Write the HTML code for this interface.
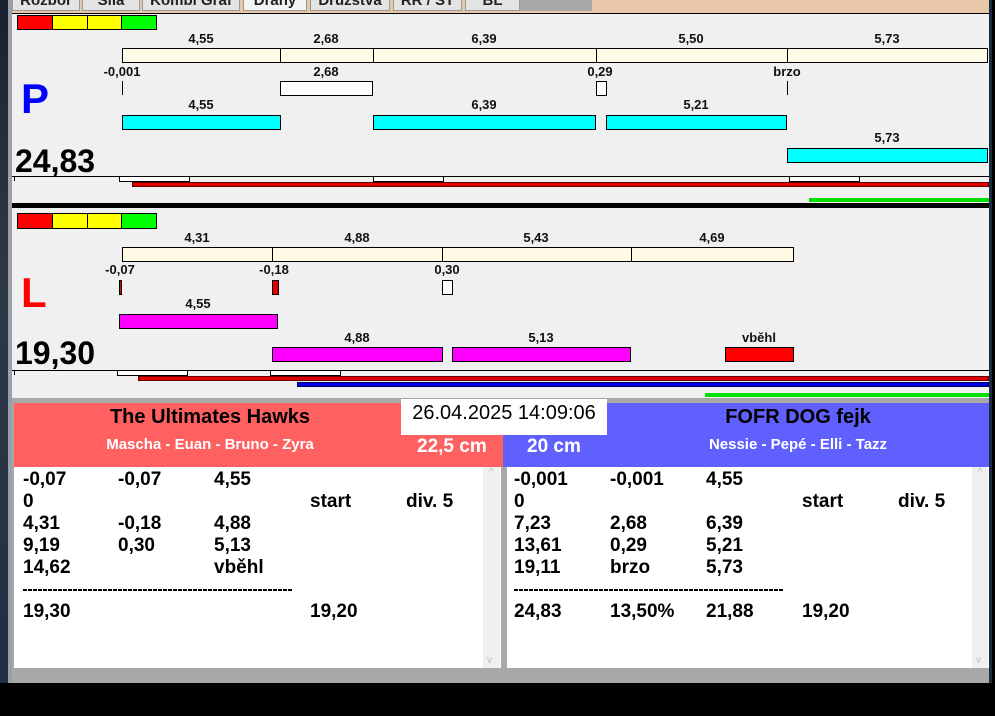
<!DOCTYPE html>
<html><head><meta charset="utf-8"><style>
*{margin:0;padding:0;box-sizing:border-box}
body{width:995px;height:716px;position:relative;overflow:hidden;background:#000;font-family:"Liberation Sans",sans-serif}
div{position:absolute}
.b{border:1px solid #000}
.l{font-weight:bold;font-size:13px;color:#111;transform:translateX(-50%);white-space:nowrap;line-height:14px}
.cr{background:#fffbe6}
.cy{background:#00ffff}
.mg{background:#ff00ff}
.t{font-family:"Liberation Sans Narrow","Liberation Sans",sans-serif;font-weight:bold;font-size:19px;color:#000;line-height:22px;white-space:nowrap}
.tab{top:0;height:11px;background:#e4e4e4;border:1px solid #999;border-top:none;font-size:15px;font-weight:bold;overflow:hidden;text-align:center;line-height:1px;color:#222}
.d{height:2px;background:repeating-linear-gradient(90deg,#000 0 4px,transparent 4px 5px)}
</style></head><body>
<div style="left:0;top:0;width:9px;height:683px;background:linear-gradient(#1a2030,#303848 40%,#203040)"></div>
<div style="left:8px;top:0;width:4px;height:683px;background:#9aa0a8"></div>
<div style="left:12px;top:0;width:978px;height:13px;background:#e8c8a8"></div>
<div style="left:520px;top:0;width:72px;height:11px;background:#a8a8a8"></div>
<div class="tab" style="left:12px;width:68px">Rozbor</div>
<div class="tab" style="left:82px;width:58px">Síla</div>
<div class="tab" style="left:142px;width:98px">Kombi Graf</div>
<div class="tab" style="left:243px;width:64px;background:#f4f4f4">Dráhy</div>
<div class="tab" style="left:310px;width:80px">Družstva</div>
<div class="tab" style="left:393px;width:69px">RR / ST</div>
<div class="tab" style="left:465px;width:55px">BL</div>
<div style="left:12px;top:13px;width:978px;height:670px;background:#a8a8a8;border-top:1px solid #000"></div>
<div style="left:12px;top:14px;width:977px;height:384px;background:#f0f0f0"></div>
<div style="left:989px;top:0;width:6px;height:683px;background:#000"></div>
<div style="left:989px;top:0;width:3px;height:683px;background:#1a2a40"></div>

<div class="b" style="left:17px;top:15px;width:36px;height:15px;background:#f00"></div>
<div class="b" style="left:52px;top:15px;width:36px;height:15px;background:#ff0"></div>
<div class="b" style="left:87px;top:15px;width:35px;height:15px;background:#ff0"></div>
<div class="b" style="left:121px;top:15px;width:36px;height:15px;background:#0f0"></div>

<div class="l" style="left:201px;top:32px">4,55</div>
<div class="l" style="left:326px;top:32px">2,68</div>
<div class="l" style="left:484px;top:32px">6,39</div>
<div class="l" style="left:691px;top:32px">5,50</div>
<div class="l" style="left:887px;top:32px">5,73</div>
<div class="b cr" style="left:122px;top:48px;width:159px;height:15px"></div>
<div class="b cr" style="left:280px;top:48px;width:94px;height:15px"></div>
<div class="b cr" style="left:373px;top:48px;width:224px;height:15px"></div>
<div class="b cr" style="left:596px;top:48px;width:192px;height:15px"></div>
<div class="b cr" style="left:787px;top:48px;width:201px;height:15px"></div>

<div class="l" style="left:122px;top:65px">-0,001</div>
<div class="l" style="left:326px;top:65px">2,68</div>
<div class="l" style="left:600px;top:65px">0,29</div>
<div class="l" style="left:787px;top:65px">brzo</div>
<div style="left:122px;top:81px;width:1px;height:14px;background:#000"></div>
<div class="b" style="left:280px;top:81px;width:93px;height:15px;background:#fff"></div>
<div class="b" style="left:596px;top:81px;width:11px;height:15px;background:#fff"></div>
<div style="left:787px;top:81px;width:1px;height:14px;background:#000"></div>

<div class="l" style="left:201px;top:98px">4,55</div>
<div class="l" style="left:484px;top:98px">6,39</div>
<div class="l" style="left:696px;top:98px">5,21</div>
<div class="b cy" style="left:122px;top:115px;width:159px;height:15px"></div>
<div class="b cy" style="left:373px;top:115px;width:223px;height:15px"></div>
<div class="b cy" style="left:606px;top:115px;width:181px;height:15px"></div>
<div class="l" style="left:887px;top:131px">5,73</div>
<div class="b cy" style="left:787px;top:148px;width:201px;height:15px"></div>

<div style="left:21px;top:74px;font-size:42px;font-weight:bold;color:#0000ff;line-height:50px">P</div>
<div style="left:15px;top:143px;font-size:32px;font-weight:bold;color:#000;line-height:36px">24,83</div>
<div style="left:12px;top:176px;width:977px;height:1px;background:#000"></div>
<div style="left:14px;top:176px;width:1px;height:5px;background:#000"></div>
<div class="b" style="left:119px;top:176px;width:71px;height:6px;background:#fff"></div>
<div class="b" style="left:373px;top:176px;width:71px;height:6px;background:#fff"></div>
<div class="b" style="left:789px;top:176px;width:71px;height:6px;background:#fff"></div>
<div style="left:132px;top:182px;width:857px;height:5px;background:#e00000;border:1px solid #600"></div>
<div style="left:809px;top:198px;width:180px;height:4px;background:#00e000"></div>
<div style="left:12px;top:203px;width:977px;height:5px;background:#000"></div>

<div class="b" style="left:17px;top:213px;width:36px;height:16px;background:#f00"></div>
<div class="b" style="left:52px;top:213px;width:36px;height:16px;background:#ff0"></div>
<div class="b" style="left:87px;top:213px;width:35px;height:16px;background:#ff0"></div>
<div class="b" style="left:121px;top:213px;width:36px;height:16px;background:#0f0"></div>

<div class="l" style="left:197px;top:231px">4,31</div>
<div class="l" style="left:357px;top:231px">4,88</div>
<div class="l" style="left:536px;top:231px">5,43</div>
<div class="l" style="left:712px;top:231px">4,69</div>
<div class="b cr" style="left:122px;top:247px;width:151px;height:15px"></div>
<div class="b cr" style="left:272px;top:247px;width:171px;height:15px"></div>
<div class="b cr" style="left:442px;top:247px;width:190px;height:15px"></div>
<div class="b cr" style="left:631px;top:247px;width:163px;height:15px"></div>

<div class="l" style="left:120px;top:263px">-0,07</div>
<div class="l" style="left:274px;top:263px">-0,18</div>
<div class="l" style="left:447px;top:263px">0,30</div>
<div class="b" style="left:119px;top:280px;width:3px;height:15px;background:#e00000"></div>
<div class="b" style="left:272px;top:280px;width:7px;height:15px;background:#e00000"></div>
<div class="b" style="left:442px;top:280px;width:11px;height:15px;background:#fff"></div>

<div class="l" style="left:198px;top:297px">4,55</div>
<div class="b mg" style="left:119px;top:314px;width:159px;height:15px"></div>
<div class="l" style="left:357px;top:331px">4,88</div>
<div class="l" style="left:541px;top:331px">5,13</div>
<div class="l" style="left:759px;top:331px">vběhl</div>
<div class="b mg" style="left:272px;top:347px;width:171px;height:15px"></div>
<div class="b mg" style="left:452px;top:347px;width:179px;height:15px"></div>
<div class="b" style="left:725px;top:347px;width:69px;height:15px;background:#f00"></div>

<div style="left:21px;top:268px;font-size:42px;font-weight:bold;color:#f00;line-height:50px">L</div>
<div style="left:15px;top:335px;font-size:32px;font-weight:bold;color:#000;line-height:36px">19,30</div>
<div style="left:12px;top:370px;width:977px;height:1px;background:#000"></div>
<div style="left:14px;top:370px;width:1px;height:5px;background:#000"></div>
<div class="b" style="left:117px;top:370px;width:71px;height:6px;background:#fff"></div>
<div class="b" style="left:270px;top:370px;width:71px;height:6px;background:#fff"></div>
<div style="left:138px;top:376px;width:851px;height:5px;background:#e00000;border:1px solid #600"></div>
<div style="left:297px;top:382px;width:692px;height:5px;background:#0000e0;border:1px solid #006"></div>
<div style="left:705px;top:393px;width:284px;height:4px;background:#00e000"></div>

<div style="left:14px;top:403px;width:489px;height:64px;background:#ff6060"></div>
<div style="left:503px;top:403px;width:486px;height:64px;background:#6060ff"></div>
<div class="t" style="left:14px;top:405px;width:392px;text-align:center;font-size:20px;line-height:24px">The Ultimates Hawks</div>
<div class="t" style="left:14px;top:434px;width:392px;text-align:center;color:#fff;font-size:15px">Mascha - Euan - Bruno - Zyra</div>
<div class="t" style="left:608px;top:405px;width:380px;text-align:center;font-size:20px;line-height:24px">FOFR DOG fejk</div>
<div class="t" style="left:608px;top:434px;width:380px;text-align:center;color:#fff;font-size:15px">Nessie - Pepé - Elli - Tazz</div>
<div style="left:401px;top:399px;width:206px;height:36px;background:#fff;font-size:20px;text-align:center;line-height:28px;color:#000">26.04.2025 14:09:06</div>
<div style="left:417px;top:436px;font-size:19px;font-weight:bold;color:#fff;line-height:22px">22,5 cm</div>
<div style="left:527px;top:436px;font-size:19px;font-weight:bold;color:#fff;line-height:22px">20 cm</div>

<div style="left:14px;top:467px;width:487px;height:201px;background:#fff"></div>
<div style="left:483px;top:467px;width:17px;height:201px;background:#f0f0f0;color:#bbb;font-size:10px;text-align:center">^<div style="left:4px;bottom:2px">v</div></div>
<div style="left:507px;top:467px;width:482px;height:201px;background:#fff"></div>
<div style="left:972px;top:467px;width:16px;height:201px;background:#f0f0f0;color:#bbb;font-size:10px;text-align:center">^<div style="left:4px;bottom:2px">v</div></div>

<div class="t" style="left:23px;top:469px">-0,07</div><div class="t" style="left:118px;top:469px">-0,07</div><div class="t" style="left:214px;top:469px">4,55</div>
<div class="t" style="left:23px;top:491px">0</div><div class="t" style="left:310px;top:491px">start</div><div class="t" style="left:406px;top:491px">div. 5</div>
<div class="t" style="left:23px;top:513px">4,31</div><div class="t" style="left:118px;top:513px">-0,18</div><div class="t" style="left:214px;top:513px">4,88</div>
<div class="t" style="left:23px;top:535px">9,19</div><div class="t" style="left:118px;top:535px">0,30</div><div class="t" style="left:214px;top:535px">5,13</div>
<div class="t" style="left:23px;top:557px">14,62</div><div class="t" style="left:214px;top:557px">vběhl</div>
<div class="d" style="left:23px;top:589px;width:270px"></div>
<div class="t" style="left:23px;top:601px">19,30</div><div class="t" style="left:310px;top:601px">19,20</div>

<div class="t" style="left:514px;top:469px">-0,001</div><div class="t" style="left:610px;top:469px">-0,001</div><div class="t" style="left:706px;top:469px">4,55</div>
<div class="t" style="left:514px;top:491px">0</div><div class="t" style="left:802px;top:491px">start</div><div class="t" style="left:898px;top:491px">div. 5</div>
<div class="t" style="left:514px;top:513px">7,23</div><div class="t" style="left:610px;top:513px">2,68</div><div class="t" style="left:706px;top:513px">6,39</div>
<div class="t" style="left:514px;top:535px">13,61</div><div class="t" style="left:610px;top:535px">0,29</div><div class="t" style="left:706px;top:535px">5,21</div>
<div class="t" style="left:514px;top:557px">19,11</div><div class="t" style="left:610px;top:557px">brzo</div><div class="t" style="left:706px;top:557px">5,73</div>
<div class="d" style="left:514px;top:589px;width:270px"></div>
<div class="t" style="left:514px;top:601px">24,83</div><div class="t" style="left:610px;top:601px">13,50%</div><div class="t" style="left:706px;top:601px">21,88</div><div class="t" style="left:802px;top:601px">19,20</div>
</body></html>
